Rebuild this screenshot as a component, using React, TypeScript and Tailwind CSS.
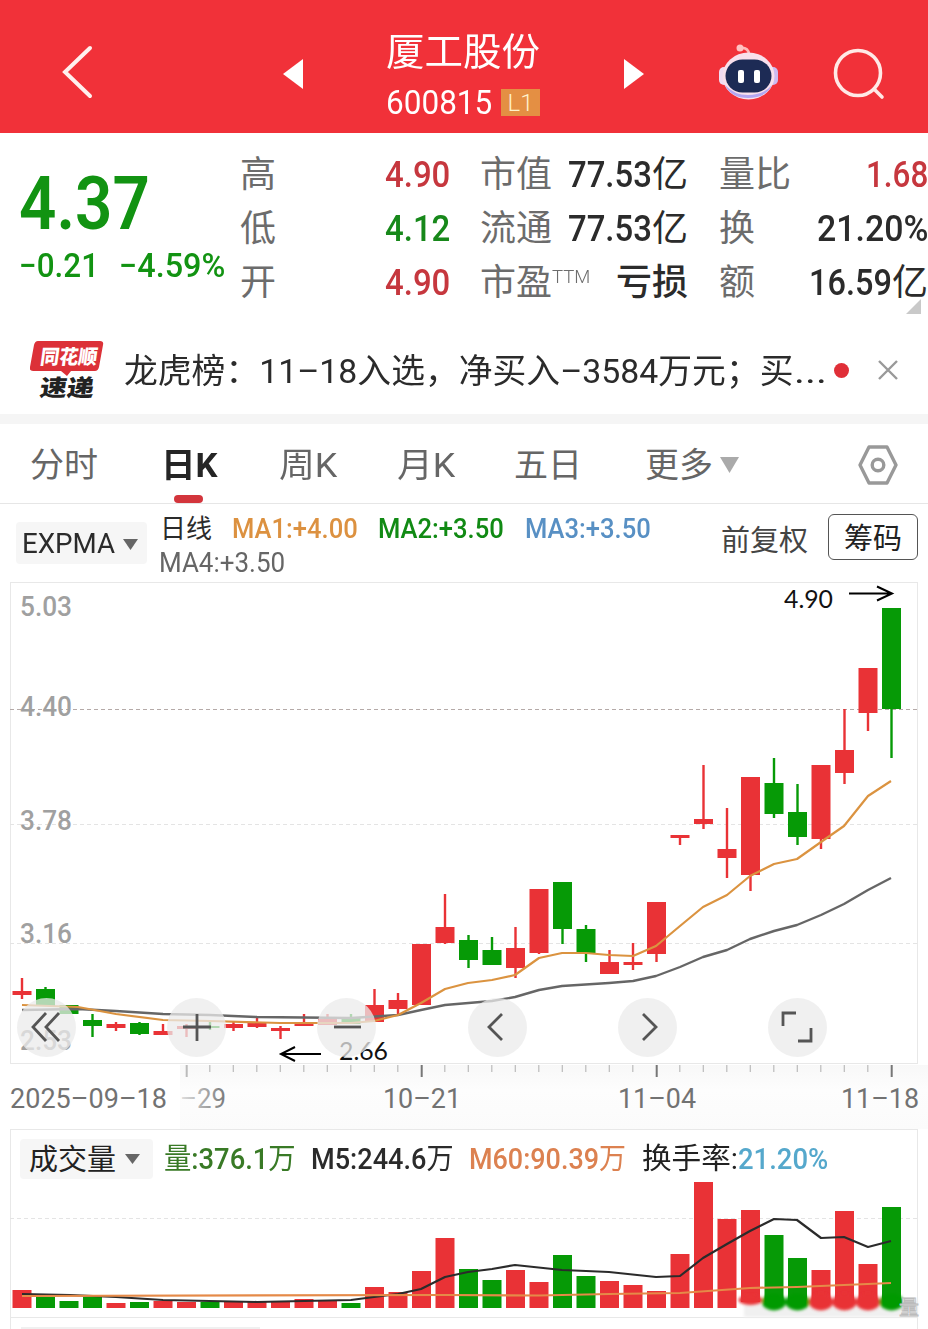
import { useLayoutEffect, useRef, type ReactNode } from "react";
import { clsx } from "clsx";

type Candle = {
  up: boolean;
  top: number;
  bottom: number;
  high: number;
  low: number;
  volume: number;
};

const c = (
  up: boolean,
  top: number,
  bottom: number,
  high: number,
  low: number,
  volume: number,
): Candle => ({ up, top, bottom, high, low, volume });

const candles: Candle[] = [
  c(true, 991, 995, 978, 999, 1290),
  c(false, 989, 1006, 987, 1006, 1297),
  c(false, 1005, 1014, 1005, 1014, 1301),
  c(false, 1020, 1026, 1014, 1037, 1297),
  c(true, 1024, 1028, 1022, 1031, 1303),
  c(false, 1023, 1034, 1022, 1035, 1302),
  c(true, 1031, 1035, 1024, 1035, 1301),
  c(true, 1026, 1029, 1024, 1037, 1302),
  c(false, 1026, 1028, 1020, 1030, 1302),
  c(true, 1024, 1028, 1022, 1031, 1302),
  c(true, 1023, 1027, 1018, 1028, 1301),
  c(true, 1028, 1031, 1026, 1039, 1302),
  c(true, 1024, 1026, 1014, 1026, 1299),
  c(true, 1019, 1025, 1014, 1025, 1301),
  c(false, 1017, 1024, 1014, 1024, 1303),
  c(true, 1005, 1022, 989, 1022, 1287),
  c(true, 1000, 1009, 993, 1014, 1292),
  c(true, 944, 1005, 944, 1005, 1271),
  c(true, 927, 943, 894, 944, 1238),
  c(false, 940, 960, 935, 968, 1269),
  c(false, 950, 965, 937, 965, 1280),
  c(true, 948, 968, 927, 978, 1270),
  c(true, 889, 953, 889, 954, 1282),
  c(false, 882, 929, 882, 944, 1255),
  c(false, 929, 953, 925, 962, 1276),
  c(true, 962, 974, 950, 974, 1281),
  c(true, 962, 965, 943, 970, 1285),
  c(true, 902, 954, 902, 962, 1291),
  c(true, 835, 838, 835, 845, 1254),
  c(true, 819, 824, 765, 829, 1182),
  c(true, 849, 858, 808, 878, 1219),
  c(true, 777, 875, 777, 891, 1210),
  c(false, 783, 814, 758, 818, 1235),
  c(false, 812, 837, 784, 845, 1258),
  c(true, 765, 839, 765, 849, 1270),
  c(true, 750, 773, 709, 784, 1211),
  c(true, 668, 713, 668, 731, 1264),
  c(false, 608, 709, 608, 758, 1207),
];

const x = (i: number) => 22 + i * 23.5;
const fill = (up: boolean) => (up ? "#e93236" : "#069a06");

const expma1 =
  "22,1005 78,1007 116,1014 163,1020 210,1021 280,1023 351,1023 374,1021 398,1015 421,1003 445,989 468,983 492,980 515,975 539,958 562,953 586,953 609,955 633,956 656,946 680,926 703,907 727,895 750,876 774,864 797,859 821,842 844,826 868,796 891,781";
const expma2 =
  "22,1010 78,1009 116,1011 163,1014 210,1015 257,1017 351,1018 398,1015 421,1010 445,1005 492,1001 515,997 539,990 562,986 609,983 633,981 656,976 680,967 703,957 727,950 750,939 774,931 797,925 821,915 844,904 868,890 891,878";
const volumeM5 =
  "22,1294 70,1295 116,1297 163,1300 257,1302 351,1300 374,1297 398,1294 421,1289 445,1277 468,1272 492,1269 515,1265 562,1270 586,1271 609,1272 656,1277 680,1276 703,1258 727,1244 750,1231 774,1219 797,1220 821,1238 844,1237 868,1247 891,1241";
const volumeM60 =
  "22,1296 445,1295 539,1295.5 609,1294 680,1293 750,1288 797,1287 844,1285 891,1283";

// Squeezes one line of text into the width of its box
function Fit({ className, children }: { className: string; children: ReactNode }) {
  const box = useRef<HTMLSpanElement>(null);
  const text = useRef<HTMLSpanElement>(null);

  useLayoutEffect(() => {
    if (!box.current || !text.current) return;
    const scale = box.current.clientWidth / text.current.offsetWidth;
    text.current.style.transform = `scaleX(${scale})`;
  }, []);

  return (
    <span ref={box} className={clsx("block shrink-0 whitespace-nowrap", className)}>
      <span ref={text} className="inline-block origin-left">
        {children}
      </span>
    </span>
  );
}

function Caret({ className }: { className: string }) {
  return (
    <svg viewBox="0 0 16 11" preserveAspectRatio="none" className={clsx("shrink-0", className)}>
      <path d="M0 0h16L8 11z" fill="currentColor" />
    </svg>
  );
}

function Robot() {
  return (
    <svg width="61" height="58" viewBox="0 0 61 58" className="-mt-1 ml-[74px]">
      <path d="M22 5q8-1 9 6" fill="none" stroke="#ffb9b9" strokeWidth="2.5" />
      <circle cx="22" cy="5" r="3.5" fill="#ffc2c2" />
      <rect x="1" y="24" width="10" height="18" rx="5" fill="#f0dcf2" />
      <rect x="50" y="24" width="10" height="18" rx="5" fill="#cdbbf0" />
      <ellipse cx="30.500" cy="33" rx="26" ry="23.500" fill="#f8e0ec" />
      <path d="M7 42q9 10 23 10 16 0 24-10-6 13-24 13-17 0-23-13z" fill="#b3a6f2" />
      <rect x="7.500" y="16.500" width="46" height="33" rx="17" fill="#1d2b55" />
      <rect x="20" y="27" width="6" height="13" rx="2" fill="#fff" />
      <rect x="36" y="27" width="6" height="13" rx="2" fill="#fff" />
    </svg>
  );
}

function Header() {
  return (
    <header className="flex h-[133px] items-center bg-[#f13139] pt-3.5 text-white">
      <svg width="32" height="54" viewBox="0 0 32 54" className="-mt-[4px] ml-[62px]">
        <path d="M28 3 3 27l25 24" fill="none" stroke="#fff0ee" strokeWidth="4" strokeLinecap="round" />
      </svg>
      <svg width="20" height="30" viewBox="0 0 20 30" className="ml-[189px]">
        <path d="M20 0v30L0 15z" fill="#fff" />
      </svg>
      <div className="ml-[83px] w-[156px] pt-[7px]">
        <Fit className="h-[51px] w-[154px] text-[38px] leading-[50px]">厦工股份</Fit>
        <div className="flex h-[50px] items-center">
          <Fit className="w-[106px] text-[33px] leading-[50px]">600815</Fit>
          <span className="ml-[9px] flex h-[27px] w-[39px] items-center justify-center bg-[#e48f43] text-[24px] leading-none font-light text-[#fff1c9]">
            L1
          </span>
        </div>
      </div>
      <svg width="20" height="30" viewBox="0 0 20 30" className="ml-[82px]">
        <path d="M0 0v30l20-15z" fill="#fff" />
      </svg>
      <Robot />
      <svg width="52" height="52" viewBox="0 0 52 52" className="ml-[54px]">
        <g fill="none" stroke="#ffe9e6" strokeWidth="3.6" strokeLinecap="round">
          <circle cx="25" cy="25" r="22.500" />
          <path d="m41 41 8 8" />
        </g>
      </svg>
    </header>
  );
}

function Row({ label, children }: { label: ReactNode; children: ReactNode }) {
  return (
    <div className="flex h-[54px] items-center justify-between">
      <span className="font-normal text-[#6c6c6c]">{label}</span>
      <div className="flex items-center">{children}</div>
    </div>
  );
}

function Quote() {
  return (
    <section className="relative flex h-[187px] pt-[15px] text-[36px] leading-[54px] text-[#2b2b2b]">
      <div className="w-60 pl-[19px] text-[#129312]">
        <Fit className="mt-[18px] h-[76px] w-[131px] text-[74px] leading-[76px] font-semibold">4.37</Fit>
        <div className="mt-1 flex text-[33px] leading-10 font-medium">
          <Fit className="w-[80px]">−0.21</Fit>
          <Fit className="ml-5 w-[106px]">−4.59%</Fit>
        </div>
      </div>
      <div className="w-[210px] font-medium">
        <Row label="高">
          <Fit className="w-[65px] text-[#c6373e]">4.90</Fit>
        </Row>
        <Row label="低">
          <Fit className="w-[65px] text-[#17881a]">4.12</Fit>
        </Row>
        <Row label="开">
          <Fit className="w-[65px] text-[#c6373e]">4.90</Fit>
        </Row>
      </div>
      <div className="ml-[30px] w-[208px] font-medium">
        <Row label="市值">
          <Fit className="w-[84px]">77.53</Fit>
          <span className="font-normal">亿</span>
        </Row>
        <Row label="流通">
          <Fit className="w-[84px]">77.53</Fit>
          <span className="font-normal">亿</span>
        </Row>
        <Row
          label={
            <span className="flex">
              市盈
              <Fit className="-mt-1.5 w-[38px] text-[19px] leading-[54px] font-light">TTM</Fit>
            </span>
          }
        >
          <span>亏损</span>
        </Row>
      </div>
      <div className="ml-[31px] w-[209px] font-medium">
        <Row label="量比">
          <Fit className="w-[62px] text-[#c6373e]">1.68</Fit>
        </Row>
        <Row label="换">
          <Fit className="w-[111px]">21.20%</Fit>
        </Row>
        <Row label="额">
          <Fit className="w-[83px]">16.59</Fit>
          <span className="font-normal">亿</span>
        </Row>
      </div>
      <svg width="15" height="15" viewBox="0 0 15 15" className="absolute right-[7px] bottom-[6px]">
        <path d="M15 0v15H0z" fill="#c9c9c9" />
      </svg>
    </section>
  );
}

function News() {
  return (
    <section className="flex h-[94px] items-center pt-1.5 text-[#2b2b2b]">
      <svg width="74" height="68" viewBox="0 -3 74 68" className="ml-[30px] shrink-0">
        <path d="M8 2h62q4 0 3 4l-4 22q-1 4-4 4H41l-4 5-6-5H3q-4 0-3-4l4-22q1-4 4-4z" fill="#dc3138" />
        <g transform="skewX(-8)" fontWeight="900">
          <text x="13" y="25" fontSize="20" fill="#fff" textLength="57" lengthAdjust="spacingAndGlyphs">
            同花顺
          </text>
          <text x="17" y="57" fontSize="23" fill="#222" textLength="54" lengthAdjust="spacingAndGlyphs">
            速递
          </text>
        </g>
      </svg>
      <Fit className="ml-5 w-[670px] pt-0.5 text-[34px] leading-[50px]">
        龙虎榜：11–18入选，净买入–3584万元；买
      </Fit>
      <Fit className="w-[33px] pt-0.5 text-[34px] leading-[50px]">...</Fit>
      <span className="ml-[7px] size-[15px] shrink-0 rounded-full bg-[#e02f38]" />
      <svg width="22" height="22" viewBox="0 0 22 22" className="ml-[28px] shrink-0">
        <path d="m2 2 18 18M20 2 2 20" stroke="#999" strokeWidth="2.4" />
      </svg>
    </section>
  );
}

function Tabs() {
  return (
    <nav className="flex h-[80px] items-center border-b border-[#e6e6e6] pt-0.5 text-[34px] leading-[50px] text-[#666]">
      <span className="ml-[30px] w-[131px]">分时</span>
      <span className="relative w-[118px] font-bold text-[#252525]">
        <Fit className="w-[57px]">日K</Fit>
        <span className="absolute top-[55px] left-[13px] h-2 w-[29px] rounded-full bg-[#d3353c]" />
      </span>
      <span className="w-[118px]">
        <Fit className="w-[58px]">周K</Fit>
      </span>
      <span className="w-[117px]">
        <Fit className="w-[58px]">月K</Fit>
      </span>
      <span className="w-[131px]">五日</span>
      <span>更多</span>
      <Caret className="ml-[7px] h-4 w-[19px] text-[#aaa]" />
      <svg width="40" height="40" viewBox="0 0 40 40" className="ml-[119px]">
        <g fill="none" stroke="#999" strokeWidth="3.4" strokeLinejoin="round">
          <path d="M11 2h18l9 18-9 18H11L2 20z" />
          <circle cx="20" cy="20" r="5.800" />
        </g>
      </svg>
    </nav>
  );
}

function Indicators() {
  return (
    <section className="flex h-[78px] text-[27px] leading-[34px]">
      <div className="mt-[18px] ml-4 flex h-[42px] w-[131px] items-center rounded bg-[#f6f6f6] pt-0.5 text-[#2b2b2b]">
        <Fit className="ml-1.5 w-[93px] text-[28px]">EXPMA</Fit>
        <Caret className="ml-2 h-[11px] w-[15px] text-[#666]" />
      </div>
      <div className="ml-[13px] w-[561px] pt-2">
        <div className="flex h-[34px]">
          <span className="w-[72px] text-[26px] text-[#2b2b2b]">日线</span>
          <Fit className="w-[126px] font-medium text-[#dc9140]">MA1:+4.00</Fit>
          <Fit className="ml-5 w-[126px] font-medium text-[#118a14]">MA2:+3.50</Fit>
          <Fit className="ml-[21px] w-[126px] font-medium text-[#5890c4]">MA3:+3.50</Fit>
        </div>
        <Fit className="-ml-px w-[126px] text-[#666]">MA4:+3.50</Fit>
      </div>
      <span className="mt-5 text-[29px] text-[#444]">前复权</span>
      <div className="mt-[10px] ml-5 flex h-[46px] w-[90px] items-center justify-center rounded-md border border-[#555] pt-1 text-[29px] text-[#222]">
        筹码
      </div>
    </section>
  );
}

const scale = [
  { y: 616, label: "5.03" },
  { y: 716, label: "4.40" },
  { y: 830, label: "3.78" },
  { y: 943, label: "3.16" },
  { y: 1050, label: "2.53" },
];

const buttons = [
  <path d="M29 15 16 29l13 14M42 15 29 29l13 14" />,
  <path d="M30 16v27M16 29h28" />,
  <path d="M17 29h27" />,
  <path d="M34 16 21 29l13 13" />,
  <path d="m25 16 13 13-13 13" />,
  <path d="M15 28V15h13M43 30v13H30" />,
];

function PriceChart() {
  return (
    <section className="relative h-[547px]">
      <svg width="928" height="547" viewBox="0 582 928 547">
        <defs>
          <linearGradient id="axis" x1="0" x2="0" y1="0" y2="1">
            <stop offset="0" stopColor="#f8f8f8" />
            <stop offset="0.4" stopColor="#fdfdfd" />
            <stop offset="1" stopColor="#fbfbfb" />
          </linearGradient>
          <linearGradient id="fade" x1="0" x2="1" y1="0" y2="0">
            <stop offset="0" stopColor="#727272" stopOpacity="0.2" />
            <stop offset="1" stopColor="#727272" stopOpacity="0.95" />
          </linearGradient>
        </defs>
        <rect x="180" y="1065" width="748" height="64" fill="url(#axis)" />
        <rect x="10.500" y="582.500" width="907" height="481" fill="none" stroke="#e8e8e8" />
        <g stroke="#e4e4e4" strokeDasharray="4 3">
          <path d="M10 709.500h907" stroke="#b5aaa8" />
          <path d="M10 824.500h907M10 943.500h907" />
        </g>
        <g fontSize="27" fontWeight="500" fill="#a0a0a0">
          {scale.map((s) => (
            <text key={s.label} x="20" y={s.y} textLength="52" lengthAdjust="spacingAndGlyphs">
              {s.label}
            </text>
          ))}
        </g>
        {candles.map((k, i) => (
          <g key={i} fill={fill(k.up)}>
            <rect x={x(i) - 1.2} y={k.high} width="2.4" height={k.low - k.high} />
            <rect x={x(i) - 9.5} y={k.top} width="19" height={k.bottom - k.top} />
          </g>
        ))}
        <polyline points={expma2} fill="none" stroke="#666" strokeWidth="2.4" strokeLinejoin="round" />
        <polyline points={expma1} fill="none" stroke="#db9340" strokeWidth="2.2" strokeLinejoin="round" />

        <g className="font-[Lato]" fontSize="25" fill="#111">
          <text x="784" y="608" textLength="49" lengthAdjust="spacingAndGlyphs">
            4.90
          </text>
          <text x="339" y="1060" textLength="49" lengthAdjust="spacingAndGlyphs">
            2.66
          </text>
        </g>
        <g fill="none" stroke="#000" strokeWidth="2">
          <path d="M849 593.500h43M877 586.500l15 7-15 7" />
          <path d="M321 1054h-40M295 1047l-14 7 14 7" />
        </g>

        {candles.map((_, i) => {
          if (i < 7) return null;
          const major = i % 10 === 7;
          return (
            <rect
              key={i}
              x={x(i) - 0.8}
              y="1065"
              width={major ? 2 : 1.2}
              height={major ? 12 : 7}
              fill={major && i > 7 ? "#777" : "#bbb"}
            />
          );
        })}
        <g fontSize="28" fill="#727272">
          <text x="10" y="1108" textLength="157" lengthAdjust="spacingAndGlyphs">
            2025–09–18
          </text>
          <text x="180" y="1108" textLength="46" lengthAdjust="spacingAndGlyphs" fill="url(#fade)">
            –29
          </text>
          <text x="383" y="1108" textLength="78" lengthAdjust="spacingAndGlyphs">
            10–21
          </text>
          <text x="618" y="1108" textLength="78" lengthAdjust="spacingAndGlyphs">
            11–04
          </text>
          <text x="841" y="1108" textLength="78" lengthAdjust="spacingAndGlyphs">
            11–18
          </text>
        </g>
      </svg>
      <div className="absolute top-[416px] left-[17px] flex gap-[91.2px]">
        {buttons.map((icon, i) => (
          <button key={i} className="size-[59px] rounded-full bg-[#ebebeb]/75">
            <svg viewBox="0 0 59 59" fill="none" stroke="#555" strokeWidth="2.8">
              {icon}
            </svg>
          </button>
        ))}
      </div>
    </section>
  );
}

function VolumeChart() {
  return (
    <section>
      <div className="mx-2.5 flex h-[53px] w-[908px] items-center border-x border-t border-[#e8e8e8] pt-1.5 text-[29px] leading-[40px] font-medium">
        <div className="ml-[9px] flex h-[40px] w-[133px] items-center rounded bg-[#f6f6f6] font-normal text-[#222]">
          <span className="ml-[9px] pt-px">成交量</span>
          <Caret className="ml-[9px] h-[10px] w-[15px] text-[#666]" />
        </div>
        <Fit className="ml-[11px] w-[132px] text-[#397a26]">
          <span className="font-normal">量</span>:376.1<span className="font-normal">万</span>
        </Fit>
        <Fit className="ml-[15px] w-[143px] text-[#2b2b2b]">
          M5:244.6<span className="font-normal">万</span>
        </Fit>
        <Fit className="ml-[15px] w-[157px] text-[#dc8150]">
          M60:90.39<span className="font-normal">万</span>
        </Fit>
        <Fit className="ml-4 w-[96px] font-normal text-[#222]">换手率:</Fit>
        <Fit className="w-[90px] text-[#55a8cc]">21.20%</Fit>
      </div>
      <svg width="928" height="147" viewBox="0 1182 928 147" className="block">
        <defs>
          <filter id="soft" x="-20%" y="-50%" width="140%" height="200%">
            <feGaussianBlur stdDeviation="1.6" />
          </filter>
        </defs>
        <path d="M10.500 1182v147M917.500 1182v147M10 1317.500h907" stroke="#e8e8e8" fill="none" />
        <path d="M10 1218.500h907" stroke="#e4e4e4" strokeDasharray="4 3" />
        <rect x="21" y="1327" width="239" height="2" fill="#f0f0f0" />
        <rect x="744" y="1300" width="174" height="17" fill="#f0f0f0" filter="url(#soft)" />
        {candles.map((k, i) => (
          <rect
            key={i}
            x={x(i) - 9.5}
            y={k.volume}
            width="19"
            height={(i > 30 ? 1302 : 1308) - k.volume}
            fill={fill(k.up)}
          />
        ))}
        <g filter="url(#soft)">
          {candles.slice(31).map((k, i) => (
            <ellipse
              key={i}
              cx={x(i + 31)}
              cy={i === 0 ? 1300 : 1302}
              rx="12"
              ry={i === 0 ? 5 : 8.5}
              fill={fill(k.up)}
            />
          ))}
        </g>
        <polyline points={volumeM5} fill="none" stroke="#2b2b2b" strokeWidth="2.2" strokeLinejoin="round" />
        <polyline points={volumeM60} fill="none" stroke="#e58a48" strokeWidth="2.2" />
        <text x="899" y="1315" fontSize="20" fill="#fff" stroke="#bbb" strokeWidth="0.8">
          量
        </text>
      </svg>
    </section>
  );
}

export default function App() {
  return (
    <main className="h-[1329px] w-[928px] overflow-hidden bg-white font-[Roboto,'Noto_Sans_CJK_SC',sans-serif]">
      <Header />
      <Quote />
      <News />
      <div className="h-2.5 bg-[#f5f5f5]" />
      <Tabs />
      <Indicators />
      <PriceChart />
      <VolumeChart />
    </main>
  );
}
